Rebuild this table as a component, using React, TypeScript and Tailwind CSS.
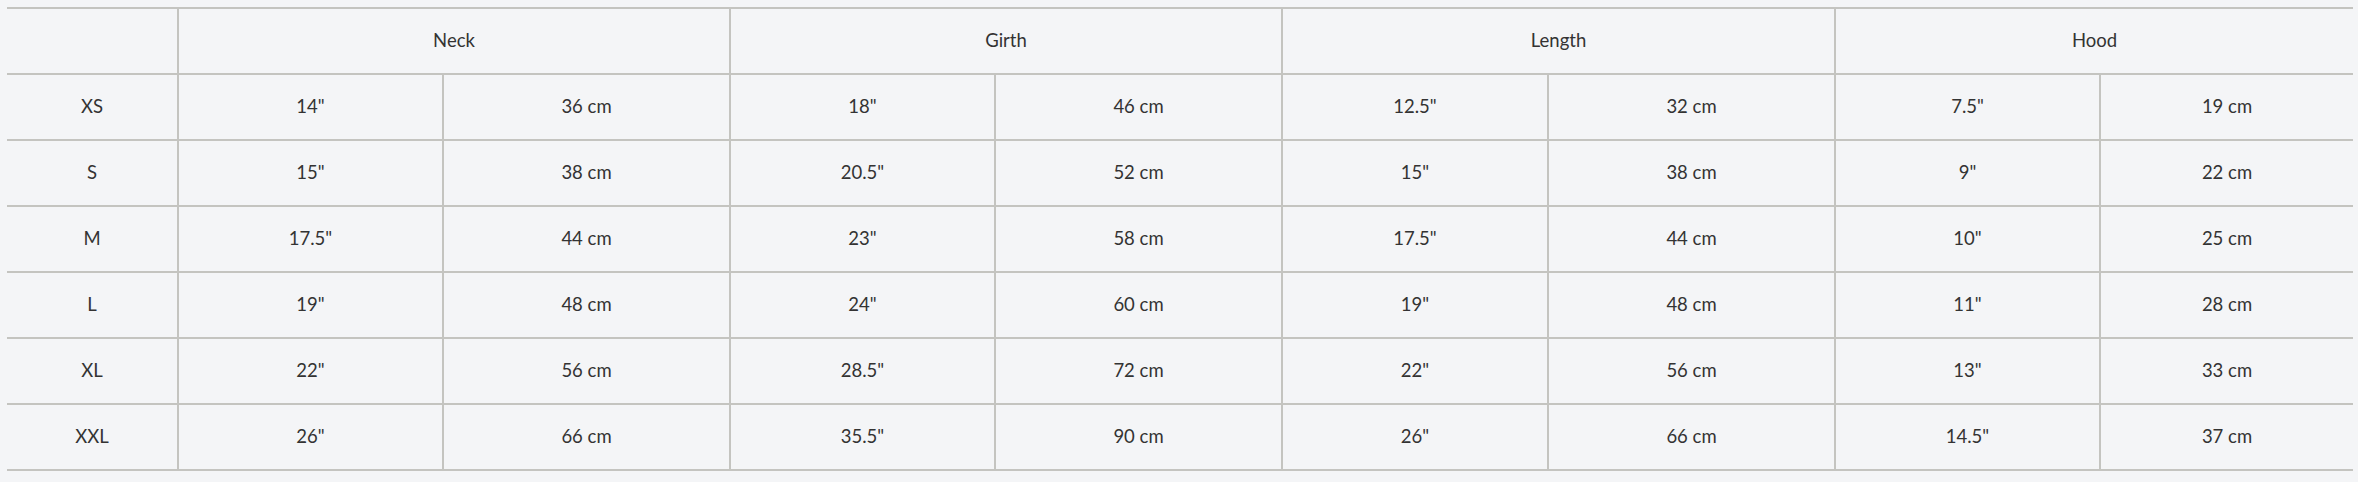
import React from "react";

const groups = ["Neck", "Girth", "Length", "Hood"];
const rows: [string, string[]][] = [
  ["XS", ['14"', "36 cm", '18"', "46 cm", '12.5"', "32 cm", '7.5"', "19 cm"]],
  ["S", ['15"', "38 cm", '20.5"', "52 cm", '15"', "38 cm", '9"', "22 cm"]],
  ["M", ['17.5"', "44 cm", '23"', "58 cm", '17.5"', "44 cm", '10"', "25 cm"]],
  ["L", ['19"', "48 cm", '24"', "60 cm", '19"', "48 cm", '11"', "28 cm"]],
  ["XL", ['22"', "56 cm", '28.5"', "72 cm", '22"', "56 cm", '13"', "33 cm"]],
  ["XXL", ['26"', "66 cm", '35.5"', "90 cm", '26"', "66 cm", '14.5"', "37 cm"]],
];

export default function App() {
  return (
    <div
      className="w-[2358px] h-[482px] bg-[#f4f5f7] pt-[7px] pl-[7px] text-[#333333] text-[18.5px]"
      style={{ fontFamily: "Lato, 'Noto Sans', sans-serif" }}
    >
      <table className="table-fixed border-collapse w-[2346px]">
        <colgroup>
          <col className="w-[171px]" />
          <col className="w-[265px]" />
          <col className="w-[287px]" />
          <col className="w-[265px]" />
          <col className="w-[287px]" />
          <col className="w-[266px]" />
          <col className="w-[287px]" />
          <col className="w-[265px]" />
          <col className="w-[253px]" />
        </colgroup>
        <thead>
          <tr className="h-[66px]">
            <th className="border-2 border-l-0 border-[#c4c4c0] font-normal p-0"></th>
            {groups.map((g, i) => (
              <th
                key={g}
                colSpan={2}
                className={
                  i === 3
                    ? "border-2 border-r-0 border-[#c4c4c0] font-normal text-center p-0"
                    : "border-2 border-[#c4c4c0] font-normal text-center p-0"
                }
              >
                {g}
              </th>
            ))}
          </tr>
        </thead>
        <tbody>
          {rows.map(([size, vals]) => (
            <tr key={size} className="h-[66px]">
              <td className="border-2 border-l-0 border-[#c4c4c0] text-center p-0">{size}</td>
              {vals.map((v, i) => (
                <td
                  key={i}
                  className={
                    i === 7
                      ? "border-2 border-r-0 border-[#c4c4c0] text-center p-0"
                      : "border-2 border-[#c4c4c0] text-center p-0"
                  }
                >
                  {v}
                </td>
              ))}
            </tr>
          ))}
        </tbody>
      </table>
    </div>
  );
}
